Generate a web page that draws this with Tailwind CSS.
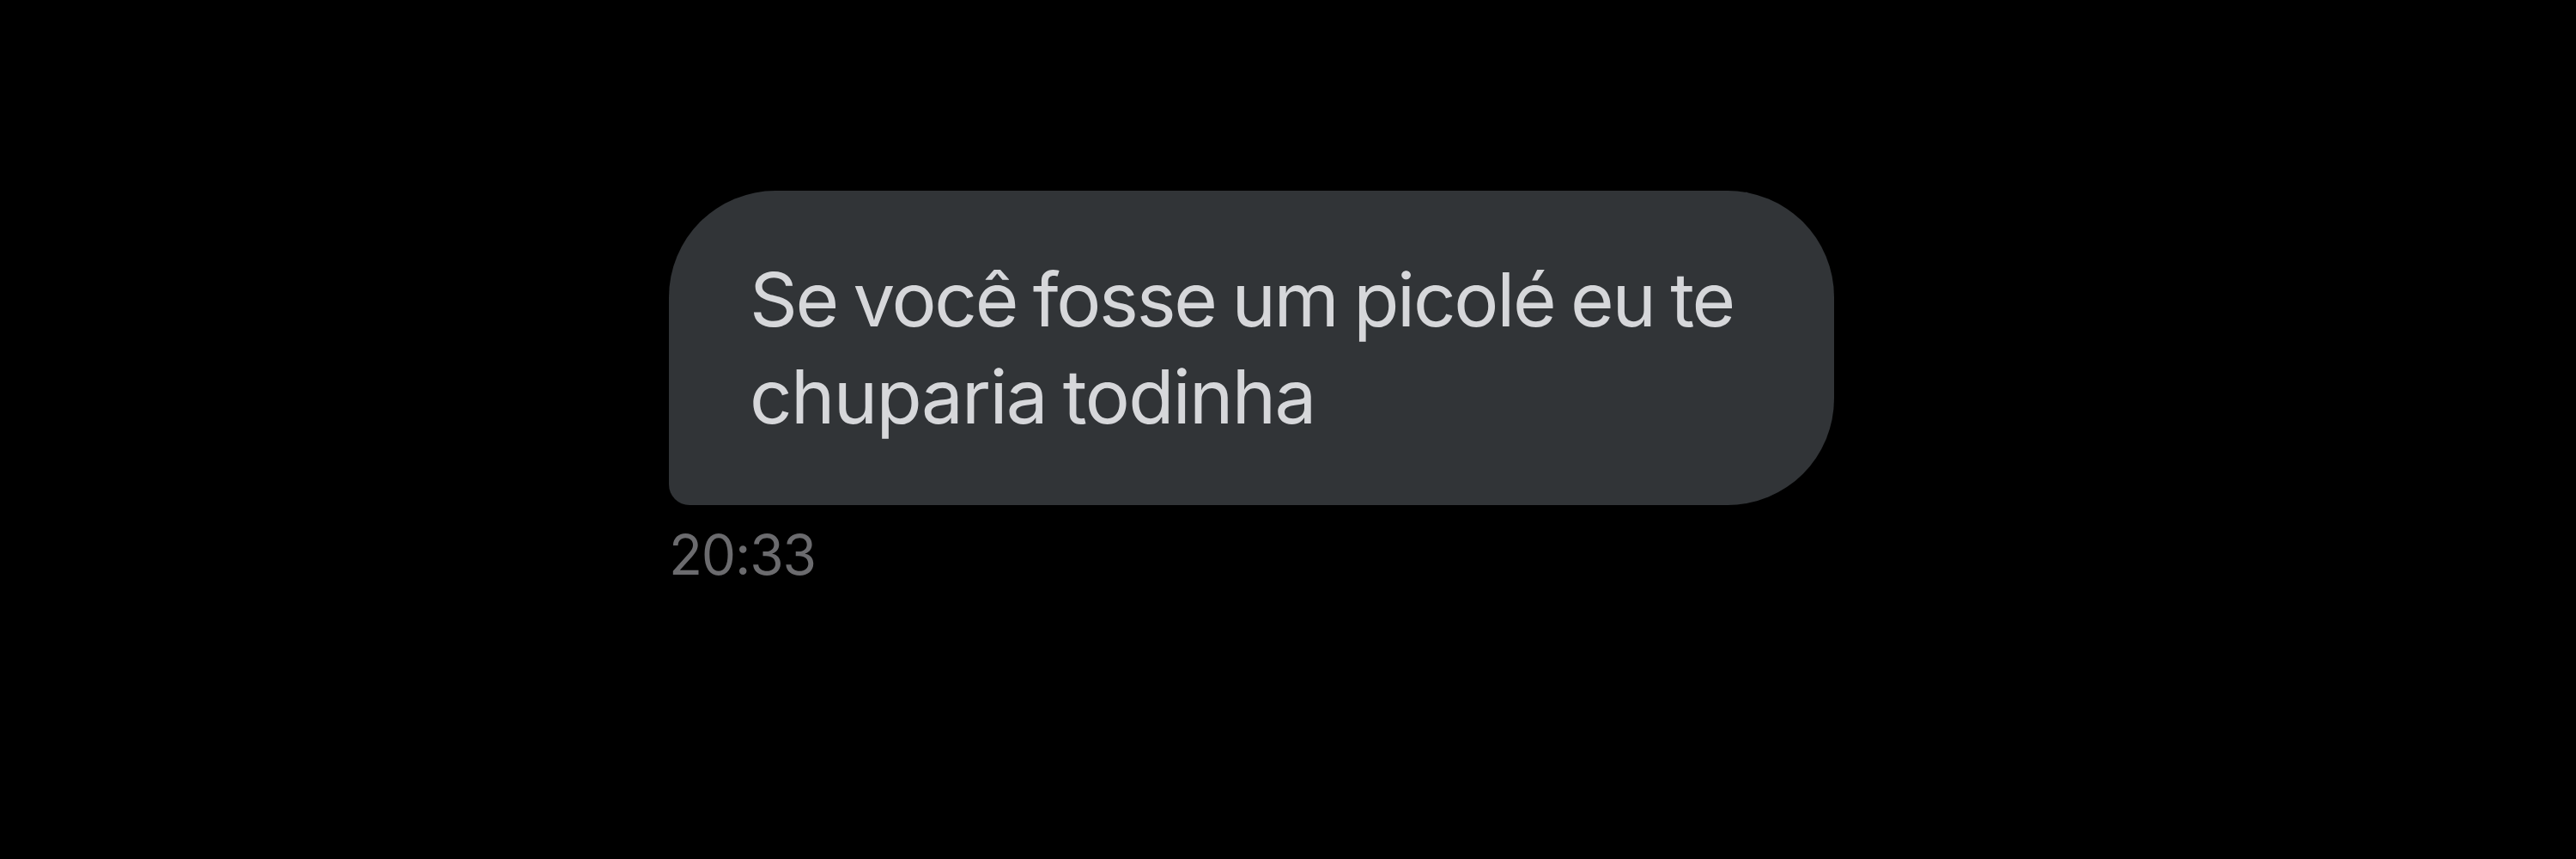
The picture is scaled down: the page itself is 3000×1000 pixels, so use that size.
<!DOCTYPE html>
<html lang="pt-BR" class="bg-black">
<head>
  <meta charset="UTF-8" />
  <meta name="viewport" content="width=device-width, initial-scale=1" />
  <title>Mensagem</title>
  <script src="https://cdn.jsdelivr.net/npm/@tailwindcss/browser@4"></script>
</head>
<body class="bg-black font-['Inter',sans-serif]">
  <main class="pl-[779px] pt-[222px] h-[1000px] overflow-hidden">
    <!-- Message bubble -->
    <div class="w-[1357px] h-[366px] pl-[94px] pt-[71px] bg-[#313437] rounded-[124px] rounded-bl-[24px]">
      <p class="text-[87px] leading-[112.5px] text-[#d6d7da] whitespace-nowrap">
        <span class="block tracking-[-2.3px] [word-spacing:-3.5px]">Se você fosse um picolé eu te</span>
        <span class="block tracking-[-1.7px] [word-spacing:-4px]">chuparia todinha</span>
      </p>
    </div>
    <!-- Sent time -->
    <time class="block mt-[18px] text-[64px] leading-[80px] tracking-[-1.2px] text-[#6b6b6e]">20:33</time>
  </main>
</body>
</html>
